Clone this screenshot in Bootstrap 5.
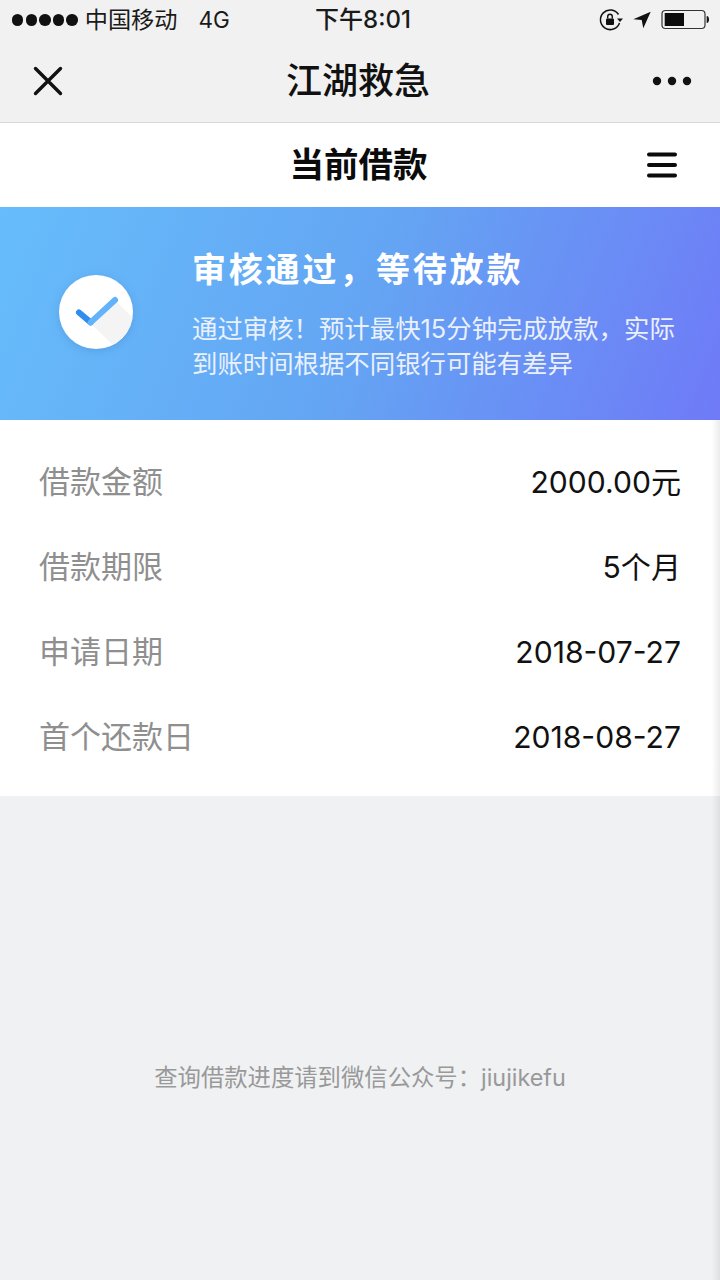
<!DOCTYPE html>
<html lang="zh-CN">
<head>
<meta charset="utf-8">
<title>当前借款</title>
<link href="https://cdn.jsdelivr.net/npm/bootstrap@5.3.0/dist/css/bootstrap.min.css" rel="stylesheet">
<style>
html,body{height:100%;}
body{width:720px;height:1280px;overflow:hidden;background:#f0f1f3;font-family:"Inter","Noto Sans CJK SC",sans-serif;color:#111;position:relative;}
body::after{content:"";position:absolute;left:708px;right:0;top:420px;bottom:0;background:linear-gradient(90deg,rgba(0,0,0,0) 30%,rgba(0,0,0,.075) 100%);pointer-events:none;}
.topchrome{background:#f1f1f1;height:123px;border-bottom:1px solid #d9d9d9;}
.statusbar{height:40px;padding:0 10px 0 12px;font-size:23.2px;color:#1a1a1a;position:relative;}
.sigdots{gap:2.2px;}
.sigdot{width:11.4px;height:11.4px;border-radius:50%;background:#111;display:block;}
.carrier{margin-left:7px;line-height:40px;}
.nettype{margin-left:21px;font-size:22.5px;line-height:40px;}
.clock{position:absolute;left:6px;right:0;top:0;text-align:center;line-height:40px;font-size:24px;font-weight:500;}
.navrow{height:82px;padding:0 28px 0 33px;}
.navtitle{position:absolute;left:0;right:4px;top:0;text-align:center;line-height:83px;font-size:36px;font-weight:500;}
.navwrap{position:relative;}
.subhead{height:84px;background:#fff;position:relative;padding-right:42px;}
.subtitle{position:absolute;left:0;right:3px;top:0;text-align:center;line-height:84px;font-size:34.5px;font-weight:700;color:#0b0b0b;}
.statusband{height:213px;background:linear-gradient(112deg,#66bdfb 0%,#64a5f3 50%,#6f7af7 100%);color:#fff;padding:0 40px 0 59px;}
.okicon{width:74px;height:74px;flex:none;margin-right:59px;margin-top:-4px;filter:drop-shadow(0 2px 4px rgba(40,90,170,.22));overflow:visible;}
.bandtext{padding-top:4px;}
.bandtitle{font-size:34px;font-weight:700;line-height:44px;letter-spacing:2.8px;margin-bottom:19px;white-space:nowrap;margin-top:-2px;}
.banddesc{font-size:25.4px;line-height:35px;color:#eaf0fe;width:490px;}
.infolist{background:#fff;height:376px;padding:20px 39px 0 39px;}
.inforow{height:85px;line-height:85px;}
.infokey{color:#8f8f8f;font-size:31px;line-height:83px;}
.infoval{color:#111;font-size:30.1px;}
.footnote{text-align:center;color:#999;font-size:23.35px;padding-top:265px;line-height:34px;}
</style>
</head>
<body>
<div class="topchrome">
  <div class="statusbar d-flex align-items-center">
    <div class="d-flex sigdots">
      <span class="sigdot"></span><span class="sigdot"></span><span class="sigdot"></span><span class="sigdot"></span><span class="sigdot"></span>
    </div>
    <span class="carrier">中国移动</span>
    <span class="nettype">4G</span>
    <div class="clock">下午8:01</div>
    <svg class="ms-auto" width="112" height="24" viewBox="0 0 112 24" fill="none" aria-hidden="true">
      <path d="M20.5 6.500A9.800 9.800 0 1 0 21.500 15" stroke="#111" stroke-width="1.500"/>
      <path d="M19 10.500h6l-3 3.500z" fill="#111"/>
      <rect x="8" y="10.500" width="8" height="6.500" rx="1" fill="#111"/>
      <path d="M9.700 10.500V8.600a2.300 2.300 0 0 1 4.600 0v1.900" stroke="#111" stroke-width="1.400"/>
      <path d="M52.700 3.700L35.300 11.300L43.700 12L45.300 20.300Z" fill="#111"/>
      <rect x="64" y="2.500" width="43" height="18" rx="3.500" stroke="#333" stroke-width="1.200"/>
      <rect x="66.700" y="5" width="19.300" height="13" fill="#0c0c0c"/>
      <path d="M108.700 8c1.600 0 2.300 1.600 2.300 3.500s-.7 3.500-2.300 3.500z" fill="#111"/>
    </svg>
  </div>
  <div class="navwrap navrow d-flex align-items-center justify-content-between">
    <svg width="30" height="30" viewBox="0 0 30 30" aria-hidden="true"><path d="M2.500 2.500L27.500 27.500M27.500 2.500L2.500 27.500" stroke="#111" stroke-width="3.400" stroke-linecap="round"/></svg>
    <div class="navtitle">江湖救急</div>
    <svg width="40" height="10" viewBox="0 0 40 10" aria-hidden="true"><circle cx="5" cy="5" r="4.200" fill="#111"/><circle cx="20" cy="5" r="4.200" fill="#111"/><circle cx="35" cy="5" r="4.200" fill="#111"/></svg>
  </div>
</div>
<div class="subhead d-flex align-items-center justify-content-end">
  <div class="subtitle">当前借款</div>
  <svg width="32" height="26" viewBox="0 0 32 26" aria-hidden="true"><path d="M3 2.500H29M3 13H29M3 23.500H29" stroke="#0b0b0b" stroke-width="4" stroke-linecap="round"/></svg>
</div>
<div class="statusband d-flex align-items-center">
  <svg class="okicon" viewBox="0 0 74 74" aria-hidden="true">
    <defs><clipPath id="disc"><circle cx="37" cy="37" r="37"/></clipPath></defs>
    <circle cx="37" cy="37" r="37" fill="#fff"/>
    <path d="M32 49L56 25L82 51L60 84L52 68Z" fill="#f4f4f4" clip-path="url(#disc)"/>
    <path d="M20 37.500L31.700 47.400" stroke="#2f8dee" stroke-width="6" stroke-linecap="round"/>
    <path d="M31.700 47.400L56 25" stroke="#62b3fb" stroke-width="6" stroke-linecap="round"/>
  </svg>
  <div class="bandtext">
    <div class="bandtitle">审核通过，等待放款</div>
    <div class="banddesc">通过审核！预计最快15分钟完成放款，实际到账时间根据不同银行可能有差异</div>
  </div>
</div>
<div class="infolist">
  <div class="inforow d-flex justify-content-between"><span class="infokey">借款金额</span><span class="infoval">2000.00元</span></div>
  <div class="inforow d-flex justify-content-between"><span class="infokey">借款期限</span><span class="infoval">5个月</span></div>
  <div class="inforow d-flex justify-content-between"><span class="infokey">申请日期</span><span class="infoval">2018-07-27</span></div>
  <div class="inforow d-flex justify-content-between"><span class="infokey">首个还款日</span><span class="infoval">2018-08-27</span></div>
</div>
<div class="footnote">查询借款进度请到微信公众号：jiujikefu</div>
<script src="https://cdn.jsdelivr.net/npm/bootstrap@5.3.0/dist/js/bootstrap.bundle.min.js"></script>
</body>
</html>
